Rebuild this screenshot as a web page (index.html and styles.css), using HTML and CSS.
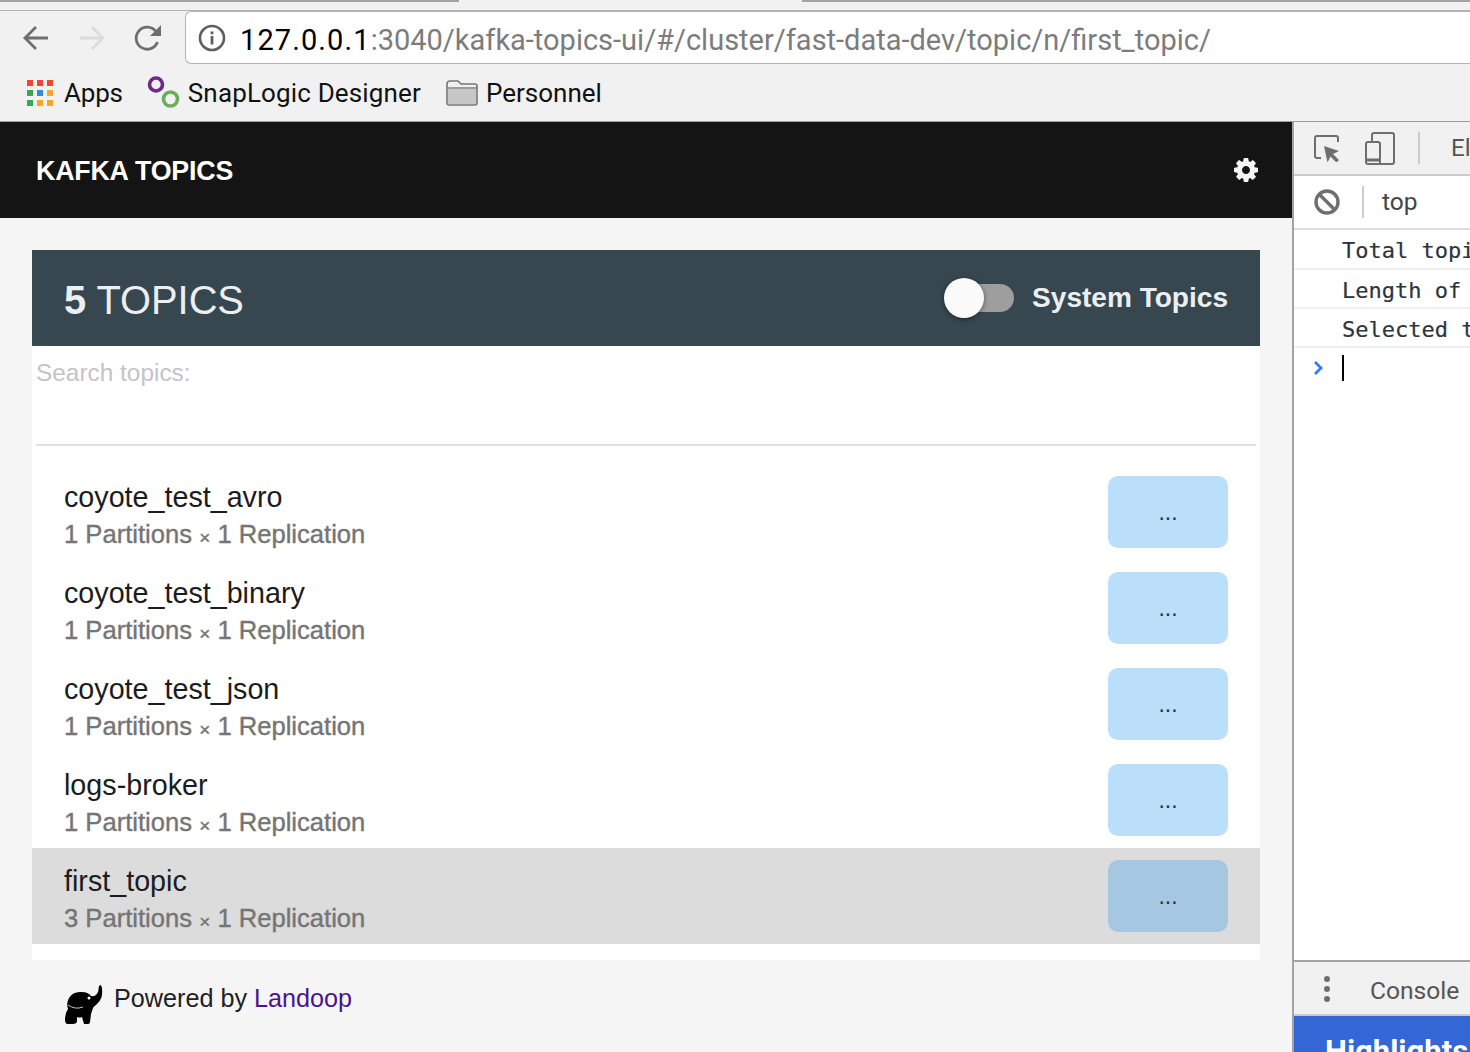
FILE: index.html
```html
<!DOCTYPE html>
<html lang="en">
<head>
<meta charset="utf-8">
<title>Kafka Topics</title>
<link rel="stylesheet" href="styles.css">
</head>
<body>
<div class="window">
  <div class="chrome">
    <div class="tabstrip"><div class="tabline tabline-left"></div><div class="tabgap"></div><div class="tabline tabline-right"></div></div>
    <div class="toolbar">
      <div class="navs">
        <svg class="nav-icon" width="28" height="28" viewBox="0 0 28 28"><path d="M26 14H3M14 3L3 14l11 11" fill="none" stroke="#6e6e6e" stroke-width="2.8"/></svg>
        <svg class="nav-icon" width="28" height="28" viewBox="0 0 28 28"><path d="M2 14h23M14 3l11 11-11 11" fill="none" stroke="#dcdcdc" stroke-width="2.8"/></svg>
        <svg class="nav-icon" width="28" height="28" viewBox="0 0 28 28"><path d="M23.5 18a11 11 0 1 1-1.6-10.5" fill="none" stroke="#6e6e6e" stroke-width="2.8"/><path d="M27 1v11H16z" fill="#6e6e6e"/></svg>
      </div>
      <div class="omnibox">
        <svg class="info" width="28" height="28" viewBox="0 0 28 28"><circle cx="14" cy="14" r="12" fill="none" stroke="#5f5f5f" stroke-width="2.6"/><rect x="12.6" y="12" width="2.8" height="8.5" fill="#5f5f5f"/><rect x="12.6" y="7.5" width="2.8" height="2.8" fill="#5f5f5f"/></svg>
        <span class="url"><span class="host">127.0.0.1</span>:3040/kafka-topics-ui/#/cluster/fast-data-dev/topic/n/first_topic/</span>
      </div>
    </div>
    <div class="bookmarks">
      <div class="bookmark bookmark-apps">
        <svg width="26" height="26" viewBox="0 0 26 26"><rect width="6" height="6" fill="#f44336"/><rect x="10" width="6" height="6" fill="#f44336"/><rect x="20" width="6" height="6" fill="#f44336"/><rect y="10" width="6" height="6" fill="#34a853"/><rect x="10" y="10" width="6" height="6" fill="#2b8fe8"/><rect x="20" y="10" width="6" height="6" fill="#f5a623"/><rect y="20" width="6" height="6" fill="#34a853"/><rect x="10" y="20" width="6" height="6" fill="#f5a623"/><rect x="20" y="20" width="6" height="6" fill="#f5a623"/></svg>
        <span>Apps</span>
      </div>
      <div class="bookmark bookmark-snap">
        <svg width="34" height="34" viewBox="0 0 34 34"><circle cx="9" cy="8.5" r="6.5" fill="none" stroke="#6a2a86" stroke-width="3.6"/><circle cx="23.5" cy="23" r="7" fill="none" stroke="#6aad5a" stroke-width="3.6"/></svg>
        <span>SnapLogic Designer</span>
      </div>
      <div class="bookmark bookmark-folder">
        <svg width="32" height="26" viewBox="0 0 32 26"><path d="M1 4q0-3 3-3h8l3 3h14q2 0 2 2v17q0 2-2 2H3q-2 0-2-2z" fill="#f0f0f0" stroke="#777" stroke-width="1.6"/><path d="M2 9h28v15H2z" fill="#c6c6c6"/><path d="M1 8h30" stroke="#777" stroke-width="1.4"/></svg>
        <span>Personnel</span>
      </div>
    </div>
  </div>
  <div class="content">
    <main class="page">
      <header class="app-bar">
        <span class="brand">KAFKA TOPICS</span>
        <svg class="gear" width="28" height="28" viewBox="0 0 1792 1792"><path fill="#f5f5f5" d="M1152 896q0-106-75-181t-181-75-181 75-75 181 75 181 181 75 181-75 75-181zm512-109v222q0 12-8 23t-20 13l-185 28q-19 54-39 91 35 50 107 138 10 12 10 25t-9 23q-27 37-99 108t-94 71q-12 0-26-9l-138-108q-44 23-91 38-16 136-29 186-7 28-36 28h-222q-14 0-24.5-8.5t-11.5-21.5l-28-184q-49-16-90-37l-141 107q-10 9-25 9-14 0-25-11-126-114-165-168-7-10-7-23 0-12 8-23 15-21 51-66.5t54-70.5q-27-50-41-99l-183-27q-13-2-21-12.5t-8-23.5v-222q0-12 8-23t19-13l186-28q14-46 39-92-40-57-107-138-10-12-10-24 0-10 9-23 26-36 98.5-107.5t94.5-71.5q13 0 26 10l138 107q44-23 91-38 16-136 29-186 7-28 36-28h222q14 0 24.5 8.5t11.5 21.5l28 184q49 16 90 37l142-107q9-9 24-9 13 0 25 10 129 119 165 170 7 8 7 22 0 12-8 23-15 21-51 66.5t-54 70.5q26 50 41 98l183 28q13 2 21 12.5t8 23.5z"/></svg>
      </header>
      <section class="card">
        <div class="card-head">
          <h1 class="count"><b>5</b> TOPICS</h1>
          <div class="switch-wrap">
            <div class="switch"><div class="switch-track"></div><div class="switch-thumb"></div></div>
            <span class="switch-label">System Topics</span>
          </div>
        </div>
        <div class="search"><span class="search-label">Search topics:</span></div>
        <div class="topics">
          <div class="topic"><div class="topic-text"><div class="topic-name">coyote_test_avro</div><div class="topic-meta">1 Partitions <small>×</small> 1 Replication</div></div><button class="more">...</button></div>
          <div class="topic"><div class="topic-text"><div class="topic-name">coyote_test_binary</div><div class="topic-meta">1 Partitions <small>×</small> 1 Replication</div></div><button class="more">...</button></div>
          <div class="topic"><div class="topic-text"><div class="topic-name">coyote_test_json</div><div class="topic-meta">1 Partitions <small>×</small> 1 Replication</div></div><button class="more">...</button></div>
          <div class="topic"><div class="topic-text"><div class="topic-name">logs-broker</div><div class="topic-meta">1 Partitions <small>×</small> 1 Replication</div></div><button class="more">...</button></div>
          <div class="topic topic-selected"><div class="topic-text"><div class="topic-name">first_topic</div><div class="topic-meta">3 Partitions <small>×</small> 1 Replication</div></div><button class="more">...</button></div>
        </div>
      </section>
      <footer class="powered">
        <svg class="elephant" width="38" height="41" viewBox="65 984 38 41"><path fill="#000" d="M100 985C102 985 102.5 990 102 995C101 1002 95 1005 93 1008L91 1014L90 1022Q90 1024 88 1024L84 1024L82 1017Q80 1018 77 1017L77 1022Q76 1024 73 1024L67 1024Q65 1023 65 1020Q65 1013 68 1009Q66 1003 69 998Q73 991 82 992Q88 992 91 996Q96 997 98 992C99 990 98 987 100 985Z"/><circle cx="89" cy="998" r="1.5" fill="#fff"/><path d="M68 1005Q75 1010 83 1007" fill="none" stroke="#f5f5f5" stroke-width=".8"/></svg>
        <span class="powered-text">Powered by <a class="powered-link">Landoop</a></span>
      </footer>
    </main>
    <aside class="devtools">
      <div class="dt-tabs">
        <svg width="28" height="28" viewBox="0 0 28 28"><path d="M8 24H4q-2 0-2-2V4q0-2 2-2h19q2 0 2 2v4" fill="none" stroke="#6e6e6e" stroke-width="2"/><path d="M11 12l15 5-6 3 6 6-2.5 2.5-6-6-3 6z" fill="#6e6e6e"/></svg>
        <svg class="dt-device" width="30" height="33" viewBox="0 0 30 33"><path d="M7 10V3q0-2 2-2h18q2 0 2 2v27q0 2-2 2H3q-2 0-2-2V12q0-2 2-2h10q2 0 2 2v20" fill="none" stroke="#6e6e6e" stroke-width="2"/><path d="M1 28h14" stroke="#6e6e6e" stroke-width="3"/></svg>
        <span class="dt-sep dt-sep-tabs"></span>
        <span class="dt-tab">Elements</span>
      </div>
      <div class="dt-filter">
        <svg width="26" height="26" viewBox="0 0 26 26"><circle cx="13" cy="13" r="11" fill="none" stroke="#6e6e6e" stroke-width="3.4"/><path d="M5 5l16 16" stroke="#6e6e6e" stroke-width="3.4"/></svg>
        <span class="dt-sep dt-sep-filter"></span>
        <span class="dt-context">top</span>
      </div>
      <div class="dt-line dt-line-first">Total topics</div>
      <div class="dt-line">Length of topics</div>
      <div class="dt-line">Selected topic</div>
      <div class="dt-prompt">
        <svg width="11" height="16" viewBox="0 0 11 16"><path d="M2 2l6 6-6 6" fill="none" stroke="#2f7bf0" stroke-width="2.8"/></svg>
        <span class="dt-caret"></span>
      </div>
      <div class="dt-spacer"></div>
      <div class="dt-drawer">
        <svg width="6" height="28" viewBox="0 0 6 28"><circle cx="3" cy="3" r="3" fill="#6e6e6e"/><circle cx="3" cy="13" r="3" fill="#6e6e6e"/><circle cx="3" cy="23" r="3" fill="#6e6e6e"/></svg>
        <span class="dt-console">Console</span>
      </div>
      <div class="dt-banner"><span>Highlights from the Chrome update</span></div>
    </aside>
  </div>
</div>
</body>
</html>
```
FILE: styles.css
```css
* { box-sizing: border-box; }
html, body { margin: 0; padding: 0; height: 100%; overflow: hidden; }
body { font-family: "Liberation Sans", Arial, sans-serif; background: #f5f5f5; }
svg { flex: none; }
.window { width: 1470px; height: 1052px; display: flex; flex-direction: column; overflow: hidden; }

.chrome { height: 122px; flex: none; background: #f1f1f1; border-bottom: 1px solid #9c9c9c; }
.tabstrip { display: flex; height: 11px; border-bottom: 1px solid #b4b4b4; }
.tabline { height: 2px; background: #a3a3a3; }
.tabline-left { width: 459px; }
.tabgap { width: 343px; }
.tabline-right { flex: 1; }
.toolbar { display: flex; height: 53px; align-items: center; }
.navs { display: flex; gap: 28px; width: 185px; padding-left: 22px; flex: none; }
.omnibox { flex: 1; height: 53px; display: flex; align-items: center; background: #fff; border: 1px solid #b4b4b4; border-right: 0; border-radius: 6px 0 0 6px; padding-left: 12px; margin-right: -10px; }
.url { margin: 4px 0 0 14px; font: 29px Roboto, sans-serif; color: #7c7c7c; white-space: nowrap; }
.host { color: #000; letter-spacing: 1.1px; }
.bookmarks { display: flex; height: 57px; align-items: center; padding-left: 27px; font: 26px Roboto, sans-serif; color: #111; }
.bookmark { display: flex; align-items: center; }
.bookmark-apps { gap: 11px; }
.bookmark-apps span { letter-spacing: -.2px; }
.bookmark-snap { gap: 7px; margin-left: 24px; letter-spacing: .15px; }
.bookmark-folder { gap: 8px; margin-left: 25px; }

.content { flex: 1; display: flex; min-height: 0; }
.page { width: 1292px; flex: none; background: #f5f5f5; display: flex; flex-direction: column; }
.app-bar { height: 96px; flex: none; background: #141414; display: flex; align-items: center; justify-content: space-between; padding: 0 32px 0 36px; }
.brand { color: #fff; font-size: 26.8px; font-weight: 700; letter-spacing: -.2px; padding-top: 3px; }

.card { margin: 32px 32px 0; width: 1228px; background: #fff; height: 710px; flex: none; }
.card-head { height: 96px; background: #37474f; display: flex; align-items: center; justify-content: space-between; padding: 0 32px; }
.count { margin: 0; padding-top: 5px; font-size: 39.8px; font-weight: 400; color: #eceff1; }
.switch-wrap { display: flex; align-items: center; gap: 18px; }
.switch { position: relative; width: 70px; height: 40px; }
.switch-track { position: absolute; left: 14px; right: 0; top: 6px; height: 28px; border-radius: 14px; background: #9e9e9e; }
.switch-thumb { position: absolute; left: 0; top: 0; width: 40px; height: 40px; border-radius: 50%; background: #fafafa; box-shadow: 0 1px 5px rgba(0,0,0,.5); }
.switch-label { font-size: 28.05px; font-weight: 700; color: #eceff1; }
.search { height: 100px; margin: 0 4px; border-bottom: 2px solid #e0e0e0; padding: 12px 1px 0 0; }
.search-label { font-size: 24.4px; color: #c4c4c4; line-height: 30px; display: block; }
.topics { padding-top: 18px; }
.topic { height: 96px; display: flex; align-items: center; justify-content: space-between; padding: 0 32px; }
.topic-selected { background: #dcdcdc; }
.topic-text { padding-top: 10px; }
.topic-name { font-size: 28.7px; color: #1c1c1c; line-height: 36px; }
.topic-meta { font-size: 25.6px; color: #757575; line-height: 36px; margin-top: 1px; -webkit-text-stroke: .4px #757575; }
.topic-meta small { font-size: 19px; vertical-align: -1px; }
.more { width: 120px; height: 72px; border: 0; border-radius: 10px; background: #bbdefb; color: #333; font: 23px "Liberation Sans", sans-serif; padding: 0; }
.topic-selected .more { background: #a5c7e2; }

.powered { display: flex; align-items: flex-start; gap: 11px; padding: 24px 0 0 65px; }
.powered-text { font-size: 25.2px; line-height: 30px; color: #212121; margin-top: -1px; }
.powered-link { color: #4a148c; }

.devtools { flex: 1; min-width: 0; display: flex; flex-direction: column; background: #fff; border-left: 2px solid #a3a3a3; overflow: hidden; font-family: Roboto, sans-serif; white-space: nowrap; }
.dt-tabs { height: 54px; flex: none; background: #f1f1f1; border-bottom: 2px solid #ccc; display: flex; align-items: center; padding-left: 19px; color: #555; font-size: 24px; }
.dt-device { margin-left: 24px; }
.dt-sep { width: 2px; height: 32px; background: #ccc; flex: none; }
.dt-sep-tabs { margin-left: 23px; }
.dt-tab { margin-left: 31px; }
.dt-filter { height: 54px; flex: none; border-bottom: 2px solid #ddd; display: flex; align-items: center; padding-left: 20px; font-size: 24.5px; color: #444; }
.dt-sep-filter { margin-left: 22px; }
.dt-context { margin-left: 18px; padding-bottom: 2px; }
.dt-line { height: 39px; flex: none; border-bottom: 2px solid #f0f0f0; padding-left: 48px; font: 22px/41px "DejaVu Sans Mono", monospace; color: #2b3440; overflow: hidden; -webkit-text-stroke: .2px #2b3440; }
.dt-line-first { height: 40px; line-height: 42px; }
.dt-prompt { flex: none; display: flex; align-items: center; height: 40px; padding-left: 19px; gap: 18px; }
.dt-caret { width: 2px; height: 26px; background: #000; }
.dt-spacer { flex: 1; }
.dt-drawer { height: 56px; flex: none; background: #f1f1f1; border-top: 2px solid #a3a3a3; border-bottom: 2px solid #ccc; display: flex; align-items: center; padding: 4px 0 0 30px; }
.dt-console { margin-left: 40px; font-size: 24.6px; color: #555; }
.dt-banner { height: 36px; flex: none; background: #3367d6; color: #fff; font-size: 31px; font-weight: 700; padding: 17px 0 0 31px; overflow: hidden; }
```
